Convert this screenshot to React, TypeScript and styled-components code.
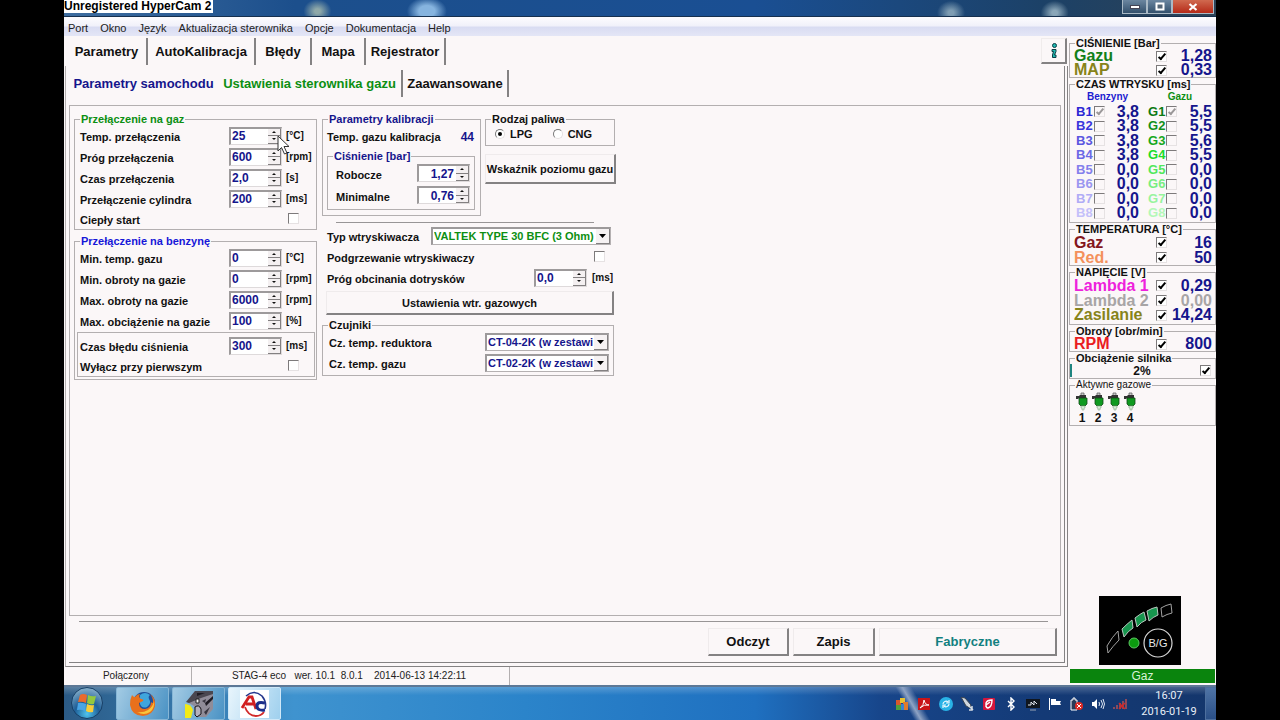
import React, { useId } from "react";
import styled, { createGlobalStyle } from "styled-components";

const SURFACE = "#fbf7f8";
const LINE = "#b3afb0";
const SHADOW = "#848283";
const NAVY = "#15158c";
const GREEN = "#0c8f12";

const GlobalStyle = createGlobalStyle`
  *, *::before, *::after { box-sizing: border-box; }
  body {
    margin: 0;
    background: #000;
    color: #111;
    font: bold 11px/14px "Liberation Sans", Arial, sans-serif;
  }
  button, input, select { font: inherit; color: inherit; margin: 0; padding: 0; border-radius: 0; }
`;

/* ---------- window ---------- */

const Screen = styled.div`
  display: flex;
  flex-direction: column;
  min-height: 100vh;
  padding: 0 5%;
`;

const TitleBar = styled.header`
  display: flex;
  justify-content: space-between;
  align-items: flex-start;
  height: 17px;
  border-bottom: 1px solid #16304f;
  background:
    radial-gradient(ellipse 14px 12px at 22% 70%, #8fa9a9 20%, transparent),
    radial-gradient(ellipse 20px 14px at 31.5% 70%, #86b4df 40%, transparent),
    radial-gradient(ellipse 14px 12px at 77% 80%, #7f9db3 20%, transparent),
    radial-gradient(ellipse 14px 12px at 86% 80%, #8aa6b8 20%, transparent),
    linear-gradient(90deg, #3e6da0, #1c4f8c 20%, #1a4f93 60%, #1c4167 85%, #2c4256);
`;

const Watermark = styled.span`
  height: 13px;
  padding-right: 2px;
  background: #fff;
  color: #000;
  font-size: 12px;
  line-height: 13px;
  white-space: nowrap;
`;

const WindowButtons = styled.div`
  display: flex;
  margin-right: 2px;
`;

const WindowButton = styled.button<{ $close?: boolean }>`
  display: flex;
  align-items: center;
  justify-content: center;
  width: ${(p) => (p.$close ? 42 : 25)}px;
  height: 14px;
  border: 1px solid #a9b9c6;
  border-top: 0;
  background: ${(p) => (p.$close ? "linear-gradient(#d0694f, #b52a18)" : "linear-gradient(#6b86a0, #33506c)")};
`;

const MenuBar = styled.nav`
  display: flex;
  align-items: center;
  gap: 12px;
  height: 19px;
  padding: 2px 4px 0;
  background: linear-gradient(#fdfcfe, #f1f1fa 45%, #d9dcf2 55%, #e4e6f6);
  font-weight: normal;
`;

const MenuLink = styled.a`
  color: #222;
  text-decoration: none;
`;

const Body = styled.div`
  display: flex;
  flex: 1;
  background: ${SURFACE};
`;

const Main = styled.main`
  display: flex;
  flex: 1;
  flex-direction: column;
  min-width: 0;
`;

/* ---------- tabs ---------- */

const TabStrip = styled.div`
  display: flex;
  align-items: flex-start;
  height: 30px;
  padding: 2px 2px 0 3px;
`;

const SubTabStrip = styled.div`
  display: flex;
  height: 27px;
  margin: 4px 0 8px;
`;

const Tab = styled.button<{ $width: number; $color?: string; $flat?: boolean; $active?: boolean }>`
  width: ${(p) => p.$width}px;
  height: 27px;
  padding-top: ${(p) => (p.$active ? 1 : 0)}px;
  border: solid ${SHADOW};
  border-width: 0 ${(p) => (p.$flat ? 0 : 2)}px 0 0;
  background: none;
  color: ${(p) => p.$color ?? "#111"};
  font-size: 13px;
  white-space: nowrap;
`;

const InfoButton = styled.button`
  display: flex;
  align-items: center;
  justify-content: center;
  width: 26px;
  height: 26px;
  margin-left: auto;
  border: solid;
  border-width: 1px 2px 2px 1px;
  border-color: #f0ecec ${SHADOW} ${SHADOW} #f0ecec;
  background: none;
`;

/* ---------- page ---------- */

const PageOuter = styled.section`
  display: flex;
  flex: 1;
  margin: 0 1px 0 1px;
  padding: 0 2px 3px 3px;
  border: solid ${SHADOW};
  border-width: 0 1px 1px 1px;
  border-left-color: ${LINE};
`;

const PageInner = styled.div`
  display: flex;
  flex: 1;
  flex-direction: column;
  min-width: 0;
  padding: 0 3px 6px 0;
  border: solid ${SHADOW};
  border-width: 0 1px 1px 0;
`;

const Frame = styled.div`
  display: flex;
  flex: 1;
  align-items: flex-start;
  gap: 5px;
  padding: 7px 4px;
  border: 1px solid ${LINE};
`;

const Rule = styled.hr<{ $margin: string }>`
  width: auto;
  height: 1px;
  margin: ${(p) => p.$margin};
  border: 0;
  background: #989596;
`;

const Actions = styled.div`
  display: flex;
  justify-content: flex-end;
  gap: 4px;
  padding-right: 4px;
`;

const PushButton = styled.button<{ $width?: number; $height: number; $large?: boolean; $color?: string }>`
  width: ${(p) => (p.$width ? `${p.$width}px` : "100%")};
  height: ${(p) => p.$height}px;
  border: solid;
  border-width: 1px 2px 2px 1px;
  border-color: #efebec ${SHADOW} ${SHADOW} #efebec;
  background: none;
  color: ${(p) => p.$color ?? "#111"};
  font-size: ${(p) => (p.$large ? 13 : 11)}px;
  white-space: nowrap;
`;

/* ---------- groups and rows ---------- */

const Group = styled.fieldset<{ $margin?: string; $height?: number }>`
  min-width: 0;
  min-height: ${(p) => p.$height ?? 0}px;
  margin: ${(p) => p.$margin ?? "0"};
  padding: 0;
  border: 1px solid ${LINE};
`;

const Legend = styled.legend<{ $color?: string; $thin?: boolean }>`
  height: 12px;
  margin-left: 5px;
  padding: 0 1px;
  color: ${(p) => p.$color ?? "#111"};
  font-size: ${(p) => (p.$thin ? 10 : 11)}px;
  font-weight: ${(p) => (p.$thin ? "normal" : "bold")};
  line-height: 12px;
  white-space: nowrap;
`;

const LeftColumn = styled.div`
  display: flex;
  flex: none;
  flex-direction: column;
  gap: 5px;
  width: 243px;
`;

const RightColumn = styled.div`
  flex: none;
  width: 294px;
`;

const Rows = styled.div`
  position: relative;
  padding: 0 0 1px 5px;
`;

const FaultBox = styled.div`
  margin: 1px 1px 1px -3px;
  padding: 2px 0 1px 2px;
  border: 1px solid ${LINE};
`;

const ParamRow = styled.div<{ $short?: boolean }>`
  display: grid;
  grid-template-columns: 145px 53px 1fr;
  align-items: center;
  column-gap: 4px;
  height: ${(p) => (p.$short ? 19 : 21)}px;
`;

const FieldLabel = styled.label`
  padding-top: 3px;
  white-space: nowrap;
`;

const Unit = styled.span`
  font-size: 10px;
  white-space: nowrap;
`;

const CheckCell = styled.span`
  grid-column: 3;
  display: flex;
  padding-left: 2px;
`;

const FlexRow = styled.div<{ $indent: number; $right: number }>`
  display: flex;
  align-items: center;
  justify-content: space-between;
  height: 21px;
  padding: 0 ${(p) => p.$right}px 0 ${(p) => p.$indent}px;
`;

const ThresholdRow = styled.div`
  display: grid;
  grid-template-columns: 1fr 53px 20px;
  align-items: center;
  column-gap: 5px;
  height: 21px;
  padding: 0 4px 0 5px;
`;

const ButtonSlot = styled.div`
  padding: 3px 2px 0 4px;
`;

const TopPair = styled.div`
  display: flex;
  gap: 4px;
`;

const Calibration = styled.div`
  width: 159px;
`;

const FuelSide = styled.div`
  display: flex;
  flex: 1;
  flex-direction: column;
  gap: 8px;
`;

const CalibValue = styled.output`
  padding-top: 3px;
  color: ${NAVY};
  font-size: 12px;
`;

const PressureRow = styled.div`
  display: flex;
  align-items: center;
  justify-content: space-between;
  height: 22px;
  padding: 0 4px 0 8px;
`;

const Radios = styled.div`
  display: flex;
  gap: 20px;
  height: 20px;
  padding: 0 9px;
`;

const RadioLabel = styled.label`
  display: flex;
  align-items: center;
  gap: 5px;
  height: 18px;
`;

const Radio = styled.input`
  appearance: none;
  display: grid;
  place-items: center;
  width: 10px;
  height: 10px;
  border: 1px solid;
  border-color: #777 #e4e0e0 #e4e0e0 #777;
  border-radius: 50%;
  background: #fff;
  &:checked::after {
    content: "";
    width: 4px;
    height: 4px;
    border-radius: 50%;
    background: #000;
  }
`;

const Check = styled.input<{ $dim?: boolean }>`
  appearance: none;
  display: flex;
  justify-content: center;
  flex: none;
  width: 11px;
  height: 11px;
  border: solid;
  border-width: 1px;
  border-color: #7d7a7b #e6e2e3 #e6e2e3 #7d7a7b;
  background: ${(p) => (p.$dim ? SURFACE : "#fff")};
  &:checked::after {
    content: "";
    width: 4px;
    height: 8px;
    border: solid ${(p) => (p.$dim ? "#9b9899" : "#000")};
    border-width: 0 2px 2px 0;
    transform: rotate(40deg);
  }
`;

/* ---------- spin box and drop-down ---------- */

const SpinBox = styled.span`
  display: flex;
  flex: none;
  width: 53px;
  height: 18px;
  border: solid;
  border-width: 2px 1px 1px 2px;
  border-color: #9d9a9b #dedadb #dedadb #9d9a9b;
  background: #fff;
`;

const SpinInput = styled.input<{ $right?: boolean }>`
  flex: 1;
  min-width: 0;
  padding: 0 2px 0 1px;
  border: 0;
  background: none;
  color: ${NAVY};
  font-size: 12px;
  text-align: ${(p) => (p.$right ? "right" : "left")};
  outline: none;
`;

const SpinArrows = styled.span`
  display: flex;
  flex-direction: column;
  width: 13px;
`;

const SpinArrow = styled.button`
  display: flex;
  flex: 1;
  align-items: center;
  justify-content: center;
  border: solid;
  border-width: 0 1px 1px 0;
  border-color: #838081;
  background: #f4f0f1;
`;

const SelectBox = styled.span<{ $width: number }>`
  position: relative;
  display: flex;
  width: ${(p) => p.$width}px;
  height: 18px;
  border: solid;
  border-width: 2px 1px 1px 2px;
  border-color: #9d9a9b #b5b1b2 #b5b1b2 #9d9a9b;
  background: #fff;
`;

const Select = styled.select<{ $color: string }>`
  appearance: none;
  flex: 1;
  min-width: 0;
  padding: 0 14px 0 1px;
  border: 0;
  background: none;
  color: ${(p) => p.$color};
  outline: none;
`;

const SelectArrow = styled.span`
  position: absolute;
  top: 0;
  right: 0;
  bottom: 0;
  display: flex;
  align-items: center;
  justify-content: center;
  width: 14px;
  border: solid #838081;
  border-width: 0 1px 1px 0;
  background: #f6f2f3;
  pointer-events: none;
`;

const Pointer = styled.svg`
  position: absolute;
  top: 10px;
  left: 202px;
  pointer-events: none;
`;

/* ---------- live readings ---------- */

const Side = styled.aside`
  display: flex;
  flex: none;
  flex-direction: column;
  width: 147px;
  padding: 1px 0 2px;
`;

const Reading = styled.div<{ $color: string; $value?: string; $height?: number }>`
  display: grid;
  grid-template-columns: 1fr 12px 44px;
  align-items: center;
  height: ${(p) => p.$height ?? 14}px;
  padding: 0 3px 0 4px;
  color: ${(p) => p.$color};
  font-size: 16px;
  line-height: 14px;
  white-space: nowrap;
  output { color: ${(p) => p.$value ?? NAVY}; text-align: right; }
`;

const Injection = styled.div`
  display: grid;
  grid-template-columns: 63px 1fr;
  column-gap: 9px;
  padding: 0 3px 0 6px;
`;

const Bank = styled.div`
  display: flex;
  flex-direction: column;
  justify-content: space-between;
  height: 130px;
`;

const BankTitle = styled.span<{ $color: string }>`
  color: ${(p) => p.$color};
  font-size: 10px;
  line-height: 14px;
  text-align: center;
`;

const Channel = styled.div<{ $color: string }>`
  display: grid;
  grid-template-columns: 18px 11px 1fr;
  align-items: center;
  height: 14px;
  color: ${(p) => p.$color};
  font-size: 13px;
  output { color: ${NAVY}; font-size: 16px; text-align: right; }
`;

const LoadRow = styled.div`
  display: flex;
  align-items: center;
  height: 13px;
  padding-right: 4px;
  border-left: 2px solid #1f8580;
  output { flex: 1; padding-left: 12px; font-size: 12px; text-align: center; }
`;

const Injectors = styled.div`
  display: flex;
  padding: 1px 4px 0;
`;

const Injector = styled.div`
  display: flex;
  flex-direction: column;
  align-items: center;
  width: 16px;
  font-size: 12px;
`;

const GaugeBox = styled.div`
  align-self: center;
  width: 82px;
  height: 69px;
  margin: auto 6px 4px 0;
  background: #000;
`;

const FuelState = styled.div`
  height: 14px;
  margin: 0 1px;
  background: #0a840d;
  color: #d8f2d8;
  font-size: 12px;
  font-weight: normal;
  line-height: 14px;
  text-align: center;
`;

/* ---------- status bar and taskbar ---------- */

const StatusBar = styled.footer`
  display: flex;
  height: 18px;
  color: #222;
  font-size: 10px;
  font-weight: normal;
  line-height: 18px;
  white-space: pre;
`;

const StatusCell = styled.span<{ $width: number }>`
  width: ${(p) => p.$width}px;
  padding-right: 3px;
  border-right: 1px solid ${LINE};
  text-align: center;
`;

const Taskbar = styled.div`
  display: flex;
  align-items: stretch;
  gap: 3px;
  height: 35px;
  border-top: 2px solid #5d7896;
  background:
    linear-gradient(60deg, transparent 72.6%, #8ea3c4 73.2%, transparent 74%),
    linear-gradient(#ffffff38, transparent 25%, transparent),
    linear-gradient(90deg, #2b5a85, #3f93cf 20%, #2b84ca 40%, #1f70c0 60%, #17458a 71%, #143a76 85%, #14366c);
`;

const StartButton = styled.button`
  display: flex;
  align-items: center;
  justify-content: center;
  width: 49px;
  padding-right: 4px;
  border: 0;
  background: none;
`;

const TaskButton = styled.button<{ $active?: boolean }>`
  display: flex;
  align-items: center;
  justify-content: center;
  width: 53px;
  border: 1px solid ${(p) => (p.$active ? "#cfe8f8" : "#86b6d6")};
  border-radius: 2px;
  background: ${(p) => (p.$active ? "linear-gradient(110deg, #e8f5fc, #9fd0ee)" : "linear-gradient(110deg, #a3cbe4, #4a92c4)")};
`;

const Tray = styled.div`
  display: flex;
  align-items: center;
  justify-content: space-between;
  width: 232px;
  margin-left: auto;
`;

const Clock = styled.time`
  display: flex;
  flex-direction: column;
  justify-content: center;
  width: 72px;
  padding-left: 6px;
  color: #e9eff8;
  font: 11px/16px Roboto, "Open Sans", sans-serif;
  text-align: center;
`;

const ShowDesktop = styled.button`
  width: 11px;
  border: 1px solid #4d6f9e;
  border-right: 0;
  background: linear-gradient(#4f74a6, #2a4f87);
`;

/* ---------- small parts ---------- */

const Spin = ({ id, value, right }: { id: string; value: string; right?: boolean }) => (
  <SpinBox>
    <SpinInput id={id} type="text" defaultValue={value} $right={right} />
    <SpinArrows>
      <SpinArrow type="button" aria-label="+">
        <svg width="4" height="2"><path d="M0 2 2 0 4 2z" fill="#111" /></svg>
      </SpinArrow>
      <SpinArrow type="button" aria-label="-">
        <svg width="4" height="2"><path d="M0 0 2 2 4 0z" fill="#111" /></svg>
      </SpinArrow>
    </SpinArrows>
  </SpinBox>
);

const Param = ({ label, value, unit }: { label: string; value: string; unit: string }) => {
  const id = useId();
  return (
    <ParamRow>
      <FieldLabel htmlFor={id}>{label}</FieldLabel>
      <Spin id={id} value={value} />
      <Unit>{unit}</Unit>
    </ParamRow>
  );
};

const CheckParam = ({ label }: { label: string }) => {
  const id = useId();
  return (
    <ParamRow $short>
      <FieldLabel htmlFor={id}>{label}</FieldLabel>
      <CheckCell><Check id={id} type="checkbox" /></CheckCell>
    </ParamRow>
  );
};

const DropDown = ({ id, value, width, color }: { id: string; value: string; width: number; color: string }) => (
  <SelectBox $width={width}>
    <Select id={id} $color={color} defaultValue={value}>
      <option>{value}</option>
    </Select>
    <SelectArrow>
      <svg width="7" height="4"><path d="M0 0h7L3.500 4z" fill="#000" /></svg>
    </SelectArrow>
  </SelectBox>
);

const Pressure = ({ label, value }: { label: string; value: string }) => {
  const id = useId();
  return (
    <PressureRow>
      <FieldLabel htmlFor={id}>{label}</FieldLabel>
      <Spin id={id} value={value} right />
    </PressureRow>
  );
};

const Live = ({ label, value, color, valueColor, height }: {
  label: string; value: string; color: string; valueColor?: string; height?: number;
}) => {
  const id = useId();
  return (
    <Reading $color={color} $value={valueColor} $height={height}>
      <label htmlFor={id}>{label}</label>
      <Check id={id} type="checkbox" defaultChecked />
      <output>{value}</output>
    </Reading>
  );
};

const BankColumn = ({ title, titleColor, letter, values, colors }: {
  title: string; titleColor: string; letter: string; values: string[]; colors: string[];
}) => (
  <Bank>
    <BankTitle $color={titleColor}>{title}</BankTitle>
    {values.map((value, i) => (
      <Channel key={letter + i} $color={colors[i]}>
        <label htmlFor={letter + i}>{letter}{i + 1}</label>
        <Check id={letter + i} type="checkbox" $dim defaultChecked={i === 0} />
        <output>{value}</output>
      </Channel>
    ))}
  </Bank>
);

const InjectorIcon = () => (
  <svg width="14" height="19" viewBox="0 0 14 19">
    <path d="M6 1h3v3H6z" fill="#c9c9c9" stroke="#666" strokeWidth="0.8" />
    <path d="M1 4h3l1-1h6v3H4L3 7H1z" fill="#333" />
    <path d="M4 6h8v6l-2 2H6l-2-2z" fill="#0f9a20" stroke="#124a18" strokeWidth="0.8" />
    <path d="M6 14h4v2H9v2H7v-2H6z" fill="#d6eed8" stroke="#8aa88c" strokeWidth="0.6" />
  </svg>
);

const Gauge = () => (
  <svg width="82" height="69" viewBox="0 0 82 69" role="img" aria-label="B/G">
    <g stroke="#b9c7bf" strokeWidth="1" strokeLinejoin="round">
      <path d="M8 50 Q13 41 19 35 L20 44 Q14 50 9 57z" fill="none" stroke="#a2a2a2" />
      <path d="M23 33 Q28 28 33 24 L34 32 Q29 35 25 41z" fill="#17964e" />
      <path d="M36 22 Q41 18 45 16 L47 24 Q42 26 38 31z" fill="#17964e" />
      <path d="M48 15 Q53 12 58 11 L59 19 Q54 21 50 25z" fill="#17964e" />
      <path d="M62 12 Q67 9 72 8 L73 17 Q68 18 63 21z" fill="none" stroke="#a2a2a2" />
    </g>
    <circle cx="35" cy="47" r="5" fill="#0b9a0f" stroke="#5cc763" />
    <circle cx="59" cy="47" r="14" fill="none" stroke="#d8d8d8" strokeWidth="1.200" />
    <text x="59" y="51" textAnchor="middle" fill="#e8e8e8" fontSize="11" fontWeight="normal">B/G</text>
  </svg>
);

const StartOrb = () => (
  <svg width="34" height="33" viewBox="0 0 34 33">
    <defs>
      <radialGradient id="orb" cx="50%" cy="85%" r="80%">
        <stop offset="0" stopColor="#4fc4ee" />
        <stop offset="0.5" stopColor="#1f5f98" />
        <stop offset="1" stopColor="#7fa9c6" />
      </radialGradient>
    </defs>
    <circle cx="17" cy="16" r="15.500" fill="url(#orb)" stroke="#173f66" />
    <path d="M10 8q3-2 7 0l-1 8q-4-2-8-1z" fill="#ea6a2c" />
    <path d="M18 8q4 2 8 1l-2 8q-4 1-7-1z" fill="#93c83e" />
    <path d="M8 16q3-1 8 1l-1 7q-4-2-8-1z" fill="#49a5e6" />
    <path d="M17 17q4 2 7 1l-1 7q-4 1-7-1z" fill="#f8cd3a" />
  </svg>
);

const Firefox = () => (
  <svg width="28" height="28" viewBox="0 0 28 28">
    <circle cx="15" cy="13" r="11" fill="#1f4f9a" />
    <path d="M11 5q5-4 10 0-2 1-1 4 3 4-2 8-5 2-7-3z" fill="#3fa5dc" />
    <path d="M3 5q1 2 3 2 2-3 5-3-2 3 1 5 3 0 2 2l-4 2q0 6 6 6 6-1 6-7 2 2 2 0 0-5-3-8 6 4 5 12-2 9-12 10Q3 26 1 15 1 9 3 5z" fill="#e8701c" />
    <path d="M25 11q1 7-4 11-6 4-13 0 6 1 11-2 5-3 6-9z" fill="#f8c63c" />
  </svg>
);

const Camcorder = () => (
  <svg width="28" height="28" viewBox="0 0 28 28">
    <path d="M10 1h18v18l-7 8h-9L9 16 2 12z" fill="#908c98" />
    <path d="M10 1h18v3L16 8 4 13 1 12z" fill="#4a4750" />
    <path d="M12 3h8l-8 3zM20 13l8-7v3l-7 7z" fill="#1f1c24" />
    <path d="M0 14q6 0 8 6l-2 8H0z" fill="#f2ea16" />
    <path d="M10 17q4-3 6 2v5l-4 3-2-2z" fill="#b4b0bc" stroke="#17151a" />
    <path d="M11 9h3v4h-3z" fill="#f4f4f4" stroke="#222" />
    <path d="M17 11l4-2-1 4zM19 22l6-5-4 8z" fill="#393640" />
  </svg>
);

const AcLogo = () => (
  <svg width="29" height="28" viewBox="0 0 29 28">
    <rect width="29" height="28" fill="#fff" />
    <path d="M6 6Q14-1 22 6q5 6 3 13" fill="none" stroke="#24368c" strokeWidth="1.600" />
    <path d="M5 17q3 9 11 9 5 0 8-4" fill="none" stroke="#d22a2a" strokeWidth="1.800" />
    <path d="M2 18 9 7h3l4 12M6 14h8" fill="none" stroke="#d22020" strokeWidth="2.800" />
    <path d="M25 13q-8-2-8 3t8 4" fill="none" stroke="#1c2f8a" strokeWidth="3" />
  </svg>
);

const trayIcons: React.ReactNode[] = [
  <g key="a"><path d="M1 3h5v5H1z" fill="#d8582c" /><path d="M5 1h5v5H5z" fill="#e8c234" /><path d="M1 8h6v5H1z" fill="#4fa03c" /><path d="M8 5h5v8H8z" fill="#e07a2c" /><path d="M6 7h3v6H6z" fill="#3a84d0" /></g>,
  <g key="b"><rect x="1" y="1" width="12" height="12" fill="#c81418" /><path d="M3 11q4-3 4-8 1 5 5 5-5-1-9 3z" fill="none" stroke="#fff" /></g>,
  <g key="c"><circle cx="7" cy="7" r="7" fill="#29b2e6" /><path d="M4 7a3 3 0 0 1 5-2m1-2v3H7M10 7a3 3 0 0 1-5 2m-1 2V8h3" fill="none" stroke="#e9f9ff" strokeWidth="1.200" /></g>,
  <g key="d"><path d="M1 0l4 1 6 7-1 3-4-2z" fill="#cfd6de" stroke="#39434f" /><path d="M8 8l5 5M12 9v4H9" fill="none" stroke="#d6dde4" strokeWidth="1.500" /></g>,
  <g key="e"><rect x="1" y="1" width="12" height="12" rx="1" fill="#d4163c" /><path d="M4 10V6q1-3 6-3 0 7-4 8-2 0-2-3l4-3" fill="none" stroke="#fff" strokeWidth="1.400" /></g>,
  <path key="f" d="M4 4l6 6-3 3V1l3 3-6 6" fill="none" stroke="#fff" strokeWidth="1.400" />,
  <g key="g"><rect x="0" y="2" width="14" height="9" fill="#10161e" /><path d="M2 8h3V5l3 3V4l3 3" fill="none" stroke="#dfe6ee" /><path d="M4 13h6" stroke="#98a4b4" /></g>,
  <g key="h" fill="#fff"><path d="M1 1h1v12H1zM3 2h5v6H3zM8 4h5l-1 2 1 2H8z" /></g>,
  <g key="i"><path d="M2 3h2V1h2v2h2v10H2z" fill="#2a3b58" stroke="#fff" /><circle cx="10" cy="9" r="4" fill="#dd2a24" /><path d="M8 7l4 4m0-4l-4 4" stroke="#fff" /></g>,
  <g key="j"><path d="M1 5h2l3-3v10L3 9H1z" fill="#fff" /><path d="M8 5q1 2 0 4M10 3q3 4 0 8M12 2q3 5 0 10" fill="none" stroke="#dfe8f4" /></g>,
  <g key="k"><path d="M0 10h2v2H0zM3 8h2v4H3zM6 6h2v6H6zM9 4h2v8H9zM12 2h2v10h-2z" fill="#8a4a5c" /><path d="M6 6l6 6m0-6l-6 6" stroke="#d22828" strokeWidth="1.500" /></g>,
];

const blues = ["#2c28d4", "#3a36dc", "#5a56e0", "#6c68e6", "#8480ec", "#9a96f0", "#b0acf6", "#c4c0fa"];
const greens = ["#0c7a12", "#12901a", "#16a820", "#1cdc2a", "#52e85c", "#78ee80", "#98f49e", "#b4f8b8"];

export default function App() {
  return (
    <>
      <GlobalStyle />
      <Screen>
        <TitleBar>
          <Watermark>Unregistered HyperCam 2</Watermark>
          <WindowButtons>
            <WindowButton type="button" aria-label="Minimalizuj">
              <svg width="10" height="4"><rect x="0.5" y="0.5" width="9" height="3" fill="#fff" stroke="#445" /></svg>
            </WindowButton>
            <WindowButton type="button" aria-label="Przywróć">
              <svg width="10" height="9"><rect x="1.500" y="1.500" width="7" height="6" fill="#567" stroke="#fff" strokeWidth="2" /></svg>
            </WindowButton>
            <WindowButton type="button" aria-label="Zamknij" $close>
              <svg width="10" height="8"><path d="M1.500 1l7 6m0-6l-7 6" stroke="#fff" strokeWidth="2.200" /></svg>
            </WindowButton>
          </WindowButtons>
        </TitleBar>

        <MenuBar>
          {["Port", "Okno", "Język", "Aktualizacja sterownika", "Opcje", "Dokumentacja", "Help"].map((item) => (
            <MenuLink key={item} href="#">{item}</MenuLink>
          ))}
        </MenuBar>

        <Body>
          <Main>
            <TabStrip>
              <Tab type="button" $width={81} $active>Parametry</Tab>
              <Tab type="button" $width={108}>AutoKalibracja</Tab>
              <Tab type="button" $width={56}>Błędy</Tab>
              <Tab type="button" $width={54}>Mapa</Tab>
              <Tab type="button" $width={80}>Rejestrator</Tab>
              <InfoButton type="button" aria-label="Info">
                <svg width="10" height="16" viewBox="0 0 10 16">
                  <circle cx="5.500" cy="2.500" r="2" fill="#1fb8b0" stroke="#0c3c44" />
                  <path d="M3 6.500h4v2L5.500 12H7v2.500H3.500V12L4.500 8.500H3z" fill="#1fb8b0" stroke="#0c3c44" />
                </svg>
              </InfoButton>
            </TabStrip>

            <PageOuter>
              <PageInner>
                <SubTabStrip>
                  <Tab type="button" $width={149} $color={NAVY} $flat>Parametry samochodu</Tab>
                  <Tab type="button" $width={185} $color={GREEN} $active>Ustawienia sterownika gazu</Tab>
                  <Tab type="button" $width={106}>Zaawansowane</Tab>
                </SubTabStrip>

                <Frame>
                  <LeftColumn>
                    <Group>
                      <Legend $color={GREEN}>Przełączenie na gaz</Legend>
                      <Rows>
                        <Param label="Temp. przełączenia" value="25" unit="[°C]" />
                        <Param label="Próg przełączenia" value="600" unit="[rpm]" />
                        <Param label="Czas przełączenia" value="2,0" unit="[s]" />
                        <Param label="Przełączenie cylindra" value="200" unit="[ms]" />
                        <CheckParam label="Ciepły start" />
                        <Pointer width="13" height="21" viewBox="0 0 13 21">
                          <path d="M1 1v15l3.500-3.500L7.500 19l2.500-1-3-6.500h5z" fill="#fff" stroke="#333" />
                        </Pointer>
                      </Rows>
                    </Group>

                    <Group>
                      <Legend $color="#1616d8">Przełączenie na benzynę</Legend>
                      <Rows>
                        <Param label="Min. temp. gazu" value="0" unit="[°C]" />
                        <Param label="Min. obroty na gazie" value="0" unit="[rpm]" />
                        <Param label="Max. obroty na gazie" value="6000" unit="[rpm]" />
                        <Param label="Max. obciążenie na gazie" value="100" unit="[%]" />
                        <FaultBox>
                          <Param label="Czas błędu ciśnienia" value="300" unit="[ms]" />
                          <CheckParam label="Wyłącz przy pierwszym" />
                        </FaultBox>
                      </Rows>
                    </Group>
                  </LeftColumn>

                  <RightColumn>
                    <TopPair>
                      <Calibration>
                        <Group $height={103}>
                          <Legend $color={NAVY}>Parametry kalibracji</Legend>
                          <FlexRow $indent={4} $right={6}>
                            <FieldLabel as="span">Temp. gazu kalibracja</FieldLabel>
                            <CalibValue>44</CalibValue>
                          </FlexRow>
                          <Group $margin="4px 5px 0 4px" $height={60}>
                            <Legend $color={NAVY}>Ciśnienie [bar]</Legend>
                            <Pressure label="Robocze" value="1,27" />
                            <Pressure label="Minimalne" value="0,76" />
                          </Group>
                        </Group>
                      </Calibration>
                      <FuelSide>
                        <Group $margin="0 1px 0 0">
                          <Legend>Rodzaj paliwa</Legend>
                          <Radios>
                            <RadioLabel><Radio type="radio" name="fuel" defaultChecked />LPG</RadioLabel>
                            <RadioLabel><Radio type="radio" name="fuel" />CNG</RadioLabel>
                          </Radios>
                        </Group>
                        <PushButton type="button" $height={30}>Wskaźnik poziomu gazu</PushButton>
                      </FuelSide>
                    </TopPair>

                    <Rule $margin="6px 22px 2px 14px" />

                    <FlexRow $indent={5} $right={5}>
                      <FieldLabel htmlFor="injector-type">Typ wtryskiwacza</FieldLabel>
                      <DropDown id="injector-type" value="VALTEK TYPE 30 BFC (3 Ohm)" width={180} color={GREEN} />
                    </FlexRow>
                    <FlexRow $indent={5} $right={11}>
                      <FieldLabel htmlFor="injector-heat">Podgrzewanie wtryskiwaczy</FieldLabel>
                      <Check id="injector-heat" type="checkbox" />
                    </FlexRow>
                    <ThresholdRow>
                      <FieldLabel htmlFor="injector-cut">Próg obcinania dotrysków</FieldLabel>
                      <Spin id="injector-cut" value="0,0" />
                      <Unit>[ms]</Unit>
                    </ThresholdRow>
                    <ButtonSlot>
                      <PushButton type="button" $height={24}>Ustawienia wtr. gazowych</PushButton>
                    </ButtonSlot>

                    <Group $margin="4px 2px 0 0" $height={57}>
                      <Legend>Czujniki</Legend>
                      <FlexRow $indent={6} $right={4}>
                        <FieldLabel htmlFor="sensor-reducer">Cz. temp. reduktora</FieldLabel>
                        <DropDown id="sensor-reducer" value="CT-04-2K (w zestawi" width={124} color={NAVY} />
                      </FlexRow>
                      <FlexRow $indent={6} $right={4}>
                        <FieldLabel htmlFor="sensor-gas">Cz. temp. gazu</FieldLabel>
                        <DropDown id="sensor-gas" value="CT-02-2K (w zestawi" width={124} color={NAVY} />
                      </FlexRow>
                    </Group>
                  </RightColumn>
                </Frame>

                <Rule $margin="5px 13px 6px 10px" />
                <Actions>
                  <PushButton type="button" $width={81} $height={28} $large>Odczyt</PushButton>
                  <PushButton type="button" $width={82} $height={28} $large>Zapis</PushButton>
                  <PushButton type="button" $width={178} $height={28} $large $color="#128080">Fabryczne</PushButton>
                </Actions>
              </PageInner>
            </PageOuter>

            <StatusBar>
              <StatusCell $width={128}>Połączony</StatusCell>
              <StatusCell $width={318}>{"STAG-4 eco   wer. 10.1  8.0.1    2014-06-13 14:22:11"}</StatusCell>
            </StatusBar>
          </Main>

          <Side>
            <Group $height={41}>
              <Legend>CIŚNIENIE [Bar]</Legend>
              <Live label="Gazu" value="1,28" color="#12801a" />
              <Live label="MAP" value="0,33" color="#87831a" />
            </Group>
            <Group $height={145}>
              <Legend>{"CZAS WTRYSKU  [ms]"}</Legend>
              <Injection>
                <BankColumn title="Benzyny" titleColor="#1c1cd0" letter="B" colors={blues}
                  values={["3,8", "3,8", "3,8", "3,8", "0,0", "0,0", "0,0", "0,0"]} />
                <BankColumn title="Gazu" titleColor={GREEN} letter="G" colors={greens}
                  values={["5,5", "5,5", "5,6", "5,5", "0,0", "0,0", "0,0", "0,0"]} />
              </Injection>
            </Group>
            <Group $height={43}>
              <Legend>TEMPERATURA [°C]</Legend>
              <Live label="Gaz" value="16" color="#84151c" height={15} />
              <Live label="Red." value="50" color="#f4915c" height={15} />
            </Group>
            <Group $height={59}>
              <Legend>NAPIĘCIE [V]</Legend>
              <Live label="Lambda 1" value="0,29" color="#ee22dc" height={15} />
              <Live label="Lambda 2" value="0,00" color="#a8a5a6" valueColor="#a8a5a6" height={15} />
              <Live label="Zasilanie" value="14,24" color="#87831a" />
            </Group>
            <Group $height={27}>
              <Legend>Obroty [obr/min]</Legend>
              <Live label="RPM" value="800" color="#ea1c22" />
            </Group>
            <Group $height={27}>
              <Legend>Obciążenie silnika</Legend>
              <LoadRow>
                <output>2%</output>
                <Check type="checkbox" aria-label="Obciążenie silnika" defaultChecked />
              </LoadRow>
            </Group>
            <Group $height={47}>
              <Legend $thin>Aktywne gazowe</Legend>
              <Injectors>
                {[1, 2, 3, 4].map((n) => (
                  <Injector key={n}><InjectorIcon />{n}</Injector>
                ))}
              </Injectors>
            </Group>
            <GaugeBox><Gauge /></GaugeBox>
            <FuelState>Gaz</FuelState>
          </Side>
        </Body>

        <Taskbar>
          <StartButton type="button" aria-label="Start"><StartOrb /></StartButton>
          <TaskButton type="button" aria-label="Firefox"><Firefox /></TaskButton>
          <TaskButton type="button" aria-label="HyperCam"><Camcorder /></TaskButton>
          <TaskButton type="button" aria-label="AC STAG" $active><AcLogo /></TaskButton>
          <Tray>
            {trayIcons.map((icon, i) => (
              <svg key={i} width="14" height="14" viewBox="0 0 14 14">{icon}</svg>
            ))}
          </Tray>
          <Clock><span>16:07</span><span>2016-01-19</span></Clock>
          <ShowDesktop type="button" aria-label="Pokaż pulpit" />
        </Taskbar>
      </Screen>
    </>
  );
}
